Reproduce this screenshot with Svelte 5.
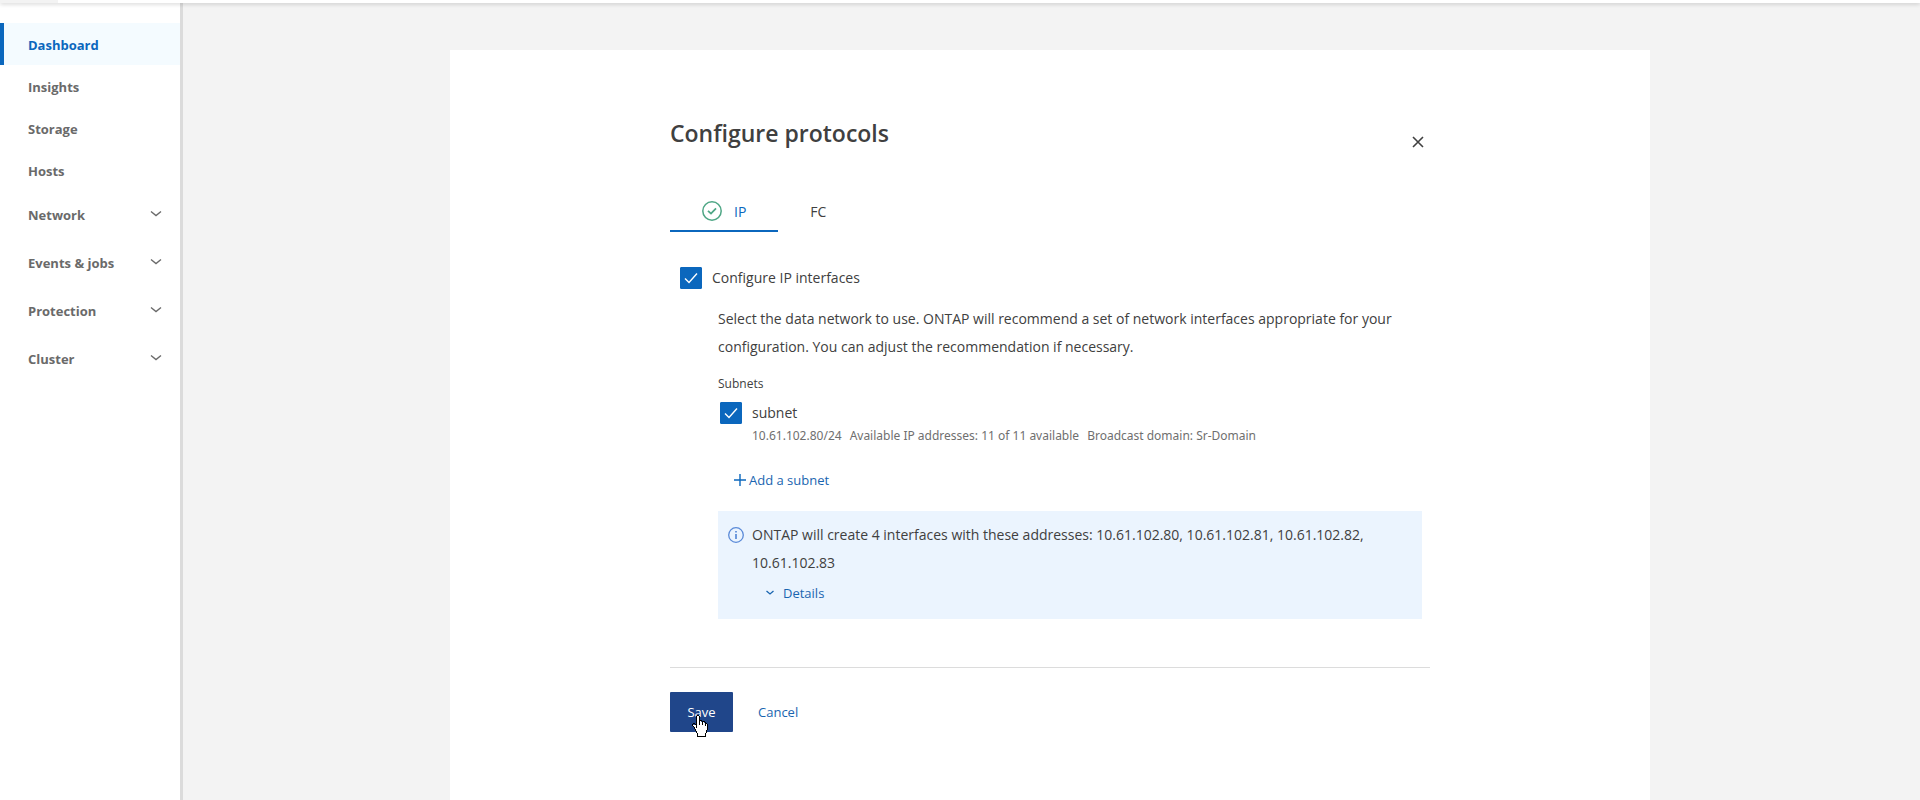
<script>
  const pages = ['Dashboard', 'Insights', 'Storage', 'Hosts'];
  const groups = ['Network', 'Events & jobs', 'Protection', 'Cluster'];
  const addresses = ['10.61.102.80', '10.61.102.81', '10.61.102.82', '10.61.102.83'];
  let current = $state('Dashboard');
  let configureIp = $state(true);
  let useSubnet = $state(true);
</script>

{#snippet check()}
  <svg class="tick" viewBox="0 0 22 22" width="22" height="22" aria-hidden="true">
    <path d="M5 11.5 L9 15.5 L17 6.5" fill="none" stroke="#fff" stroke-width="1.4" />
  </svg>
{/snippet}

<div class="app">
  <header class="topbar"><div class="menu"></div></header>
  <div class="body">
    <nav class="sidebar">
      {#each pages as page}
        <a href="#{page.toLowerCase()}" class="item" class:active={page === current} onclick={() => (current = page)}>{page}</a>
      {/each}
      {#each groups as group}
        <button type="button" class="item group">
          {group}
          <svg viewBox="0 0 12 12" width="12" height="12" aria-hidden="true">
            <path d="M1 2.5 L6 6.5 L11 2.5" fill="none" stroke="#6a6a6a" stroke-width="1.4" />
          </svg>
        </button>
      {/each}
    </nav>

    <main class="main">
      <section class="card">
        <form class="form" onsubmit={(e) => e.preventDefault()}>
          <div class="head">
            <h1>Configure protocols</h1>
            <button type="button" class="close" aria-label="Close">
              <svg viewBox="0 0 12 12" width="12" height="12" aria-hidden="true">
                <path d="M1 1 L11 11 M11 1 L1 11" fill="none" stroke="#404040" stroke-width="1.6" />
              </svg>
            </button>
          </div>

          <div class="tabs" role="tablist">
            <button type="button" role="tab" aria-selected="true" class="tab selected">
              <svg viewBox="0 0 20 20" width="20" height="20" aria-hidden="true">
                <circle cx="10" cy="10" r="9.2" fill="none" stroke="#4ea685" stroke-width="1.5" />
                <path d="M6 9.8 L9 12.6 L14 7.4" fill="none" stroke="#4ea685" stroke-width="1.8" />
              </svg>
              IP
            </button>
            <button type="button" role="tab" aria-selected="false" class="tab">FC</button>
          </div>

          <label class="option main-option">
            <span class="box"><input type="checkbox" bind:checked={configureIp} />{@render check()}</span>
            Configure IP interfaces
          </label>

          <div class="details">
            <p class="intro">
              Select the data network to use. ONTAP will recommend a set of network interfaces appropriate for your
              configuration. You can adjust the recommendation if necessary.
            </p>
            <div class="caption">Subnets</div>
            <label class="option subnet">
              <span class="box"><input type="checkbox" bind:checked={useSubnet} />{@render check()}</span>
              subnet
            </label>
            <div class="meta">
              <span>10.61.102.80/24</span>
              <span>Available IP addresses: 11 of 11 available</span>
              <span>Broadcast domain: Sr-Domain</span>
            </div>
            <button type="button" class="link add">
              <svg viewBox="0 0 12 12" width="12" height="12" aria-hidden="true">
                <path d="M6 0 V12 M0 6 H12" fill="none" stroke="#0b67bd" stroke-width="1.4" />
              </svg>
              Add a subnet
            </button>
            <div class="notice">
              <svg class="info" viewBox="0 0 16 16" width="16" height="16" aria-hidden="true">
                <circle cx="8" cy="8" r="7.3" fill="none" stroke="#5a8ad8" stroke-width="1.3" />
                <path d="M8 7 V12 M8 4 V5.6" fill="none" stroke="#5a8ad8" stroke-width="1.7" />
              </svg>
              <div>
                <p>ONTAP will create 4 interfaces with these addresses: {addresses.join(', ')}</p>
                <button type="button" class="link more">
                  <svg viewBox="0 0 8 8" width="8" height="8" aria-hidden="true">
                    <path d="M0.5 2 L4 5 L7.5 2" fill="none" stroke="#1a65b0" stroke-width="1.3" />
                  </svg>
                  Details
                </button>
              </div>
            </div>
          </div>

          <footer class="actions">
            <button type="submit" class="save">
              Save
              <svg class="pointer" viewBox="0 0 17 22" width="17" height="22" aria-hidden="true" shape-rendering="crispEdges">
                <path
                  d="M5 1 H7 V6 H9 V7 H12 V8 H14 V9 H16 V15 H15 V18 H14 V21 H6 V18 H5 V17 H4 V15 H3 V13 H2 V12 H1 V10 H4 V11 H5 Z"
                  fill="#fff"
                />
                <path
                  d="M5 0h2v1h-2z M4 1h1v9h-1z M7 1h1v9h-1z M8 5h2v1h-2z M10 6h1v4h-1z M11 6h2v1h-2z M13 7h1v4h-1z M14 8h1v1h-1z M15 9h1v6h-1z M14 15h1v3h-1z M13 18h1v3h-1z M5 21h9v1h-9z M5 18h1v3h-1z M4 16h1v2h-1z M3 14h1v2h-1z M2 12h1v2h-1z M1 11h1v1h-1z M0 9h1v2h-1z M1 8h2v1h-2z M3 9h1v1h-1z M4 10h1v3h-1z"
                  fill="#000"
                />
              </svg>
            </button>
            <button type="button" class="link">Cancel</button>
          </footer>
        </form>
      </section>
    </main>
  </div>
</div>

<style>
  :global(body) {
    margin: 0;
    background: #f3f3f3;
  }
  .app {
    display: flex;
    flex-direction: column;
    min-height: 100vh;
    font-family: 'Open Sans', 'Noto Sans', sans-serif;
    font-size: 14px;
    color: #404040;
  }
  button {
    font: inherit;
    color: inherit;
    border: 0;
    padding: 0;
    background: none;
    cursor: pointer;
  }
  h1,
  p {
    margin: 0;
  }
  svg {
    display: block;
    flex: none;
  }
  .topbar {
    position: relative;
    z-index: 1;
    height: 3px;
    background: #fff;
    box-shadow: 0 1px 4px rgba(0, 0, 0, 0.2);
  }
  .menu {
    width: 58px;
    height: 100%;
    background: #f3f3f3;
  }
  .body {
    display: flex;
    flex: 1;
  }
  .sidebar {
    display: flex;
    flex-direction: column;
    flex: none;
    width: 180px;
    padding-top: 20px;
    background: #fff;
    box-shadow: 3px 0 0 #dbdbdb;
  }
  .item {
    display: flex;
    align-items: center;
    box-sizing: border-box;
    height: 42px;
    padding: 2px 18px 0 28px;
    font-size: 13px;
    font-weight: 700;
    color: #6a6a6a;
    text-decoration: none;
  }
  .item.active {
    padding-left: 24px;
    border-left: 4px solid #0b67bd;
    background: #f4fbff;
    color: #0b67bd;
  }
  .group {
    justify-content: space-between;
    height: 48px;
    padding-top: 0;
  }
  .main {
    display: flex;
    flex: 1;
    justify-content: center;
    padding-top: 47px;
  }
  .card {
    display: flex;
    justify-content: center;
    flex: 0 1 1200px;
    background: #fff;
  }
  .form {
    flex: 0 1 760px;
    padding: 64px 20px 48px;
  }
  .head {
    display: flex;
    justify-content: space-between;
    align-items: flex-start;
  }
  h1 {
    font-size: 23px;
    line-height: 38px;
    font-weight: 600;
  }
  .close {
    padding: 22px 6px 0;
  }
  .tabs {
    display: flex;
    margin-top: 40px;
  }
  .tab {
    display: flex;
    align-items: center;
    gap: 12px;
    height: 40px;
    padding: 0 32px;
    border-bottom: 2px solid transparent;
  }
  .tab.selected {
    border-color: #0b67bd;
    color: #0b67bd;
  }
  .option {
    display: flex;
    align-items: center;
    gap: 10px;
    line-height: 22px;
  }
  .main-option {
    margin: 35px 0 0 10px;
  }
  .box {
    display: grid;
  }
  .box > :global(*) {
    grid-area: 1 / 1;
  }
  input {
    appearance: none;
    width: 22px;
    height: 22px;
    margin: 0;
    border: 1px solid #0b67bd;
    border-radius: 1px;
    background: #fff;
  }
  input:checked {
    background: #0b67bd;
  }
  .tick {
    pointer-events: none;
  }
  .details {
    margin: 16px 8px 0 48px;
  }
  .intro {
    line-height: 28px;
  }
  .caption {
    margin-top: 14px;
    font-size: 12px;
    line-height: 18px;
  }
  .subnet {
    margin: 9px 0 0 2px;
  }
  .meta {
    display: flex;
    gap: 8px;
    margin: 2px 0 0 34px;
    font-family: 'Noto Sans', 'Open Sans', sans-serif;
    font-size: 12px;
    line-height: 20px;
    color: #6f6f6f;
  }
  .link {
    display: flex;
    align-items: center;
    font-size: 13px;
    line-height: 20px;
    color: #1a65b0;
  }
  .add {
    gap: 3px;
    margin: 24px 0 0 16px;
  }
  .notice {
    display: flex;
    gap: 8px;
    margin-top: 21px;
    padding: 10px 32px 16px 10px;
    line-height: 28px;
    background: #ebf4fe;
  }
  .info {
    margin-top: 6px;
  }
  .more {
    gap: 9px;
    margin: 6px 0 0 14px;
  }
  .actions {
    display: flex;
    gap: 25px;
    margin-top: 48px;
    padding-top: 24px;
    border-top: 1px solid #dcdcdc;
  }
  .save {
    position: relative;
    min-width: 63px;
    height: 40px;
    padding: 0 16px;
    border-radius: 1px;
    font-size: 13px;
    background: #20468a;
    color: #fff;
  }
  .pointer {
    position: absolute;
    top: 23px;
    left: 22px;
  }
</style>
